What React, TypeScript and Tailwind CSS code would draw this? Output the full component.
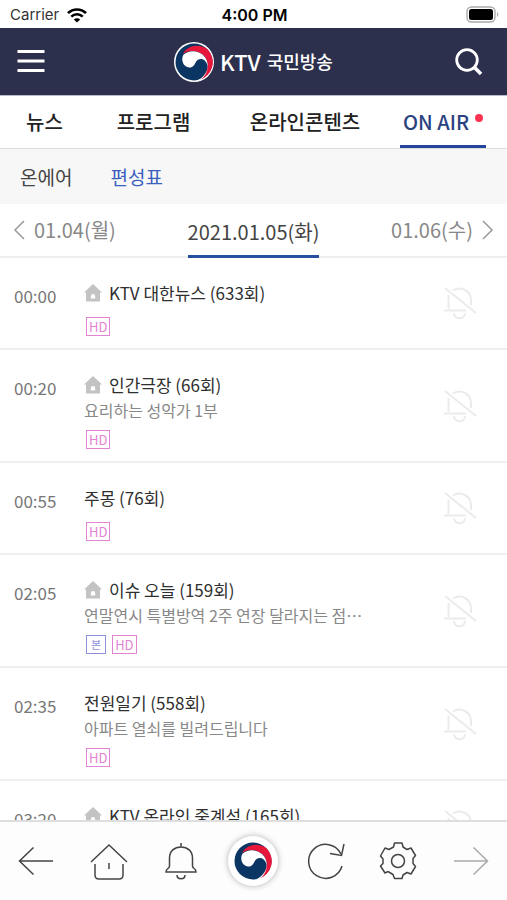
import { useState } from 'react';
import clsx from 'clsx';

type Badge = 'HD' | '본';

interface Program {
  time: string;
  title: string;
  subtitle?: string;
  first?: boolean;
  badges: Badge[];
}

const menus = ['뉴스', '프로그램', '온라인콘텐츠'];

const programs: Program[] = [
  { time: '00:00', title: 'KTV 대한뉴스 (633회)', first: true, badges: ['HD'] },
  { time: '00:20', title: '인간극장 (66회)', subtitle: '요리하는 성악가 1부', first: true, badges: ['HD'] },
  { time: '00:55', title: '주몽 (76회)', badges: ['HD'] },
  { time: '02:05', title: '이슈 오늘 (159회)', subtitle: '연말연시 특별방역 2주 연장 달라지는 점…', first: true, badges: ['본', 'HD'] },
  { time: '02:35', title: '전원일기 (558회)', subtitle: '아파트 열쇠를 빌려드립니다', badges: ['HD'] },
  { time: '03:20', title: 'KTV 온라인 중계석 (165회)', first: true, badges: ['HD'] },
];

function Emblem({ className }: { className?: string }) {
  return (
    <svg viewBox="-4 -4 108 108" className={className} aria-hidden="true">
      <circle cx="50" cy="50" r="54" fill="#fff" />
      <circle cx="50" cy="50" r="50" fill="#0b3562" />
      <path d="M20 28C34 4 66 0 87 16A50 50 0 0 1 66 98C92 78 92 46 76 32C60 18 38 16 20 28Z" fill="#e6173a" />
      <path d="M21 31C36 17 60 18 75 32C93 49 92 80 68 98L60 99.500C87 84 93 60 80 47C72 39 60 41 55 50C51 58 47 66 37 65C21 63 14 45 21 31Z" fill="#fff" />
    </svg>
  );
}

function StatusBar() {
  return (
    <div className="grid h-7 shrink-0 grid-cols-3 items-center bg-white pr-2 pl-[10px] font-['Inter',sans-serif] text-black">
      <div className="flex items-center gap-2 pt-0.5 text-[15px] text-[#333]">
        Carrier
        <svg viewBox="0 0 20 15" className="h-[15px] w-5" fill="none" stroke="#000" strokeWidth="2.6">
          <path d="M1 5.2C6 .2 14 .2 19 5.2" />
          <path d="M4.3 8.6C7.5 5.5 12.5 5.5 15.7 8.6" />
          <path d="M10 14.6L6.8 11.4C8.5 9.8 11.5 9.8 13.2 11.4Z" fill="#000" stroke="none" />
        </svg>
      </div>
      <div className="pt-0.5 text-center text-base font-semibold">4:00 PM</div>
      <svg viewBox="0 0 33 17" className="h-[17px] w-[33px] justify-self-end">
        <rect x="1" y="1" width="28" height="15" rx="4.5" fill="#fff" stroke="#aaa" strokeWidth="1.4" />
        <rect x="3" y="3" width="24" height="11" rx="2.5" fill="#000" />
        <path d="M31 6C32.8 7 32.8 10 31 11Z" fill="#aaa" />
      </svg>
    </div>
  );
}

function Header() {
  return (
    <header className="flex h-[68px] shrink-0 items-center justify-between border-b border-[#b9bdcb] bg-[#2c304d] px-4 text-white">
      <button aria-label="메뉴" className="w-9">
        <svg viewBox="0 0 28 24" className="ml-px h-6 w-7" stroke="currentColor" strokeWidth="2.8">
          <path d="M.5 1.5H27.5M.5 11H27.5M.5 20.5H27.5" />
        </svg>
      </button>
      <a href="#" className="flex items-center gap-1.5">
        <Emblem className="h-10 w-10" />
        <span className="flex items-center gap-1.5 pb-0.5">
          <span className="text-[22px] leading-8 font-medium">KTV</span>
          <span className="text-lg leading-8 font-medium">국민방송</span>
        </span>
      </a>
      <button aria-label="검색" className="w-9">
        <svg viewBox="0 0 28 28" className="h-7 w-7" fill="none" stroke="currentColor" strokeWidth="2.8">
          <circle cx="12" cy="12" r="10.3" />
          <path d="M19.3 19.3L26 26" strokeWidth="3.6" />
        </svg>
      </button>
    </header>
  );
}

function HouseIcon() {
  return (
    <svg viewBox="0 0 18 18" className="h-[18px] w-[18px] shrink-0" fill="#c3c3c3" aria-hidden="true">
      <path fillRule="evenodd" d="M9 0L18 8.500H16V17.500H2V8.500H0ZM9 10A2.200 2.200 0 0 0 6.800 12.200V14.500H11.200V12.200A2.200 2.200 0 0 0 9 10Z" />
    </svg>
  );
}

function BellOffIcon() {
  return (
    <svg viewBox="0 0 34 34" className="h-[34px] w-[34px]" fill="none" stroke="#ebebeb" strokeWidth="2">
      <path d="M2 2L33 27" />
      <path d="M5.5 9V23M1 24.5H23M10 4.5C18 -.5 28 5 28 14V19" />
      <path d="M11 27C11.500 34 21.500 34 22 27" />
    </svg>
  );
}

function ProgramRow({ program }: { program: Program }) {
  const [alarm, setAlarm] = useState(false);

  return (
    <li className="flex items-center border-b-2 border-[#efefef] pr-[30px] pl-[14px]">
      <time className="w-[70px] shrink-0 self-start pt-[26px] text-[17px] leading-6 text-[#777]">{program.time}</time>
      <div className="min-w-0 flex-1 pt-[22px] pb-3">
        <div className="flex items-center gap-[7px]">
          {program.first && <HouseIcon />}
          <h3 className="truncate text-[17px] leading-[26px] text-[#2f2f2f]">{program.title}</h3>
        </div>
        {program.subtitle && (
          <p className="-mb-[3px] truncate text-base leading-6 text-[#888]">{program.subtitle}</p>
        )}
        <div className="mt-[11px] flex gap-1.5 pl-0.5">
          {program.badges.map((badge) => (
            <span
              key={badge}
              className={clsx(
                'flex items-center border leading-[17px]',
                badge === 'HD'
                  ? 'border-[#e383d3] px-0.5 text-[13px] text-[#e383d3]'
                  : 'border-[#8f8fdc] px-1 text-[11px] text-[#8f8fdc]'
              )}
            >
              {badge}
            </span>
          ))}
        </div>
      </div>
      <button aria-label="알림" aria-pressed={alarm} onClick={() => setAlarm(!alarm)}>
        <BellOffIcon />
      </button>
    </li>
  );
}

function BottomBar() {
  const item = 'flex flex-1 items-center justify-center';
  const icon = 'h-10 w-10';
  const line = { viewBox: '0 0 40 40', fill: 'none', stroke: '#444', strokeWidth: 1.5 };

  return (
    <nav className="flex h-20 shrink-0 border-t-2 border-[#dedede] bg-[#fdfdfd]">
      <button aria-label="뒤로" className={item}>
        <svg {...line} className={icon}>
          <path d="M37 20H3.500M17.500 6.500L3.500 20L17.500 33.500" />
        </svg>
      </button>
      <button aria-label="홈" className={item}>
        <svg {...line} className={icon}>
          <path d="M2 21L20 4L38 21" />
          <path d="M6 23V34Q6 38 10 38H30Q34 38 34 34V23M20 22V28" />
        </svg>
      </button>
      <button aria-label="알림" className={item}>
        <svg {...line} className={icon}>
          <path d="M20 2V6M8.500 25V17C8.500 10 13.500 6 20 6S31.500 10 31.500 17V25C31.500 28 35 27 35 31H5C5 27 8.500 28 8.500 25Z" />
          <path d="M16 34C16 39 24 39 24 34" />
        </svg>
      </button>
      <button aria-label="온에어" className={item}>
        <span className="flex h-[50px] w-[50px] items-center justify-center rounded-full bg-white shadow-[0_0_6px_rgba(0,0,0,0.3)]">
          <Emblem className="h-10 w-10" />
        </span>
      </button>
      <button aria-label="새로고침" className={item}>
        <svg {...line} className={icon}>
          <path d="M36 25A17 17 0 1 1 35 13" />
          <path d="M38 3L35.500 14.500L24 12.500" />
        </svg>
      </button>
      <button aria-label="설정" className={item}>
        <svg {...line} className={icon}>
          <circle cx="20" cy="20" r="6.500" />
          <path d="M10 30.500L7 32L2.500 25L5 22.500V18L2.500 15L7 7L11 8.500L15.500 6L16.500 2H24L25 6L29 8.500L33 7L37.500 14.500L35 17.500V22.500L37.500 25.500L33 33L29 31.500L25 34L24 37.500H16.500L15 33.500L10 30.500" strokeLinejoin="round" />
        </svg>
      </button>
      <button aria-label="앞으로" className={item}>
        <svg {...line} stroke="#aaa" className={icon}>
          <path d="M3 20H36.500M22.500 6.500L36.500 20L22.500 33.500" />
        </svg>
      </button>
    </nav>
  );
}

export default function App() {
  return (
    <div className="flex h-screen flex-col overflow-hidden bg-white font-['Noto_Sans_CJK_KR',sans-serif]">
      <StatusBar />
      <Header />

      <nav className="grid h-[53px] shrink-0 grid-cols-[89fr_129fr_174fr_102fr] border-b border-[#dcdcdc] pr-[13px] text-xl font-medium">
        {menus.map((menu) => (
          <a key={menu} href="#" className="flex items-center justify-center whitespace-nowrap text-[#222]">
            {menu}
          </a>
        ))}
        <a href="#" className="flex items-center gap-1.5 justify-self-center border-b-[3px] border-[#25459b] px-[3px] pt-[3px] whitespace-nowrap text-[#2a4380]">
          ON AIR
          <span className="mb-2 h-2 w-2 rounded-full bg-[#fb3250]" />
        </a>
      </nav>

      <nav className="flex h-[55px] shrink-0 items-center gap-[38px] bg-[#f7f7f7] px-5 pt-0.5 text-[19px]">
        <a href="#" className="text-[#444]">온에어</a>
        <a href="#" className="text-[#3a5fbe]">편성표</a>
      </nav>

      <div className="flex h-[54px] shrink-0 justify-between border-b-2 border-[#efefef] px-3 text-xl text-[#888]">
        <button className="flex items-center gap-2">
          <svg viewBox="0 0 14 22" className="h-[22px] w-3.5" fill="none" stroke="#999" strokeWidth="1.5">
            <path d="M12 2L3 11L12 20" />
          </svg>
          01.04(월)
        </button>
        <button className="-mb-0.5 flex items-center border-b-[3px] border-[#25509f] pt-1 text-[#444]">
          2021.01.05(화)
        </button>
        <button className="flex items-center gap-2">
          01.06(수)
          <svg viewBox="0 0 14 22" className="h-[22px] w-3.5" fill="none" stroke="#999" strokeWidth="1.5">
            <path d="M2 2L11 11L2 20" />
          </svg>
        </button>
      </div>

      <ul className="min-h-0 flex-1 overflow-hidden">
        {programs.map((program) => (
          <ProgramRow key={program.time} program={program} />
        ))}
      </ul>

      <BottomBar />
    </div>
  );
}
